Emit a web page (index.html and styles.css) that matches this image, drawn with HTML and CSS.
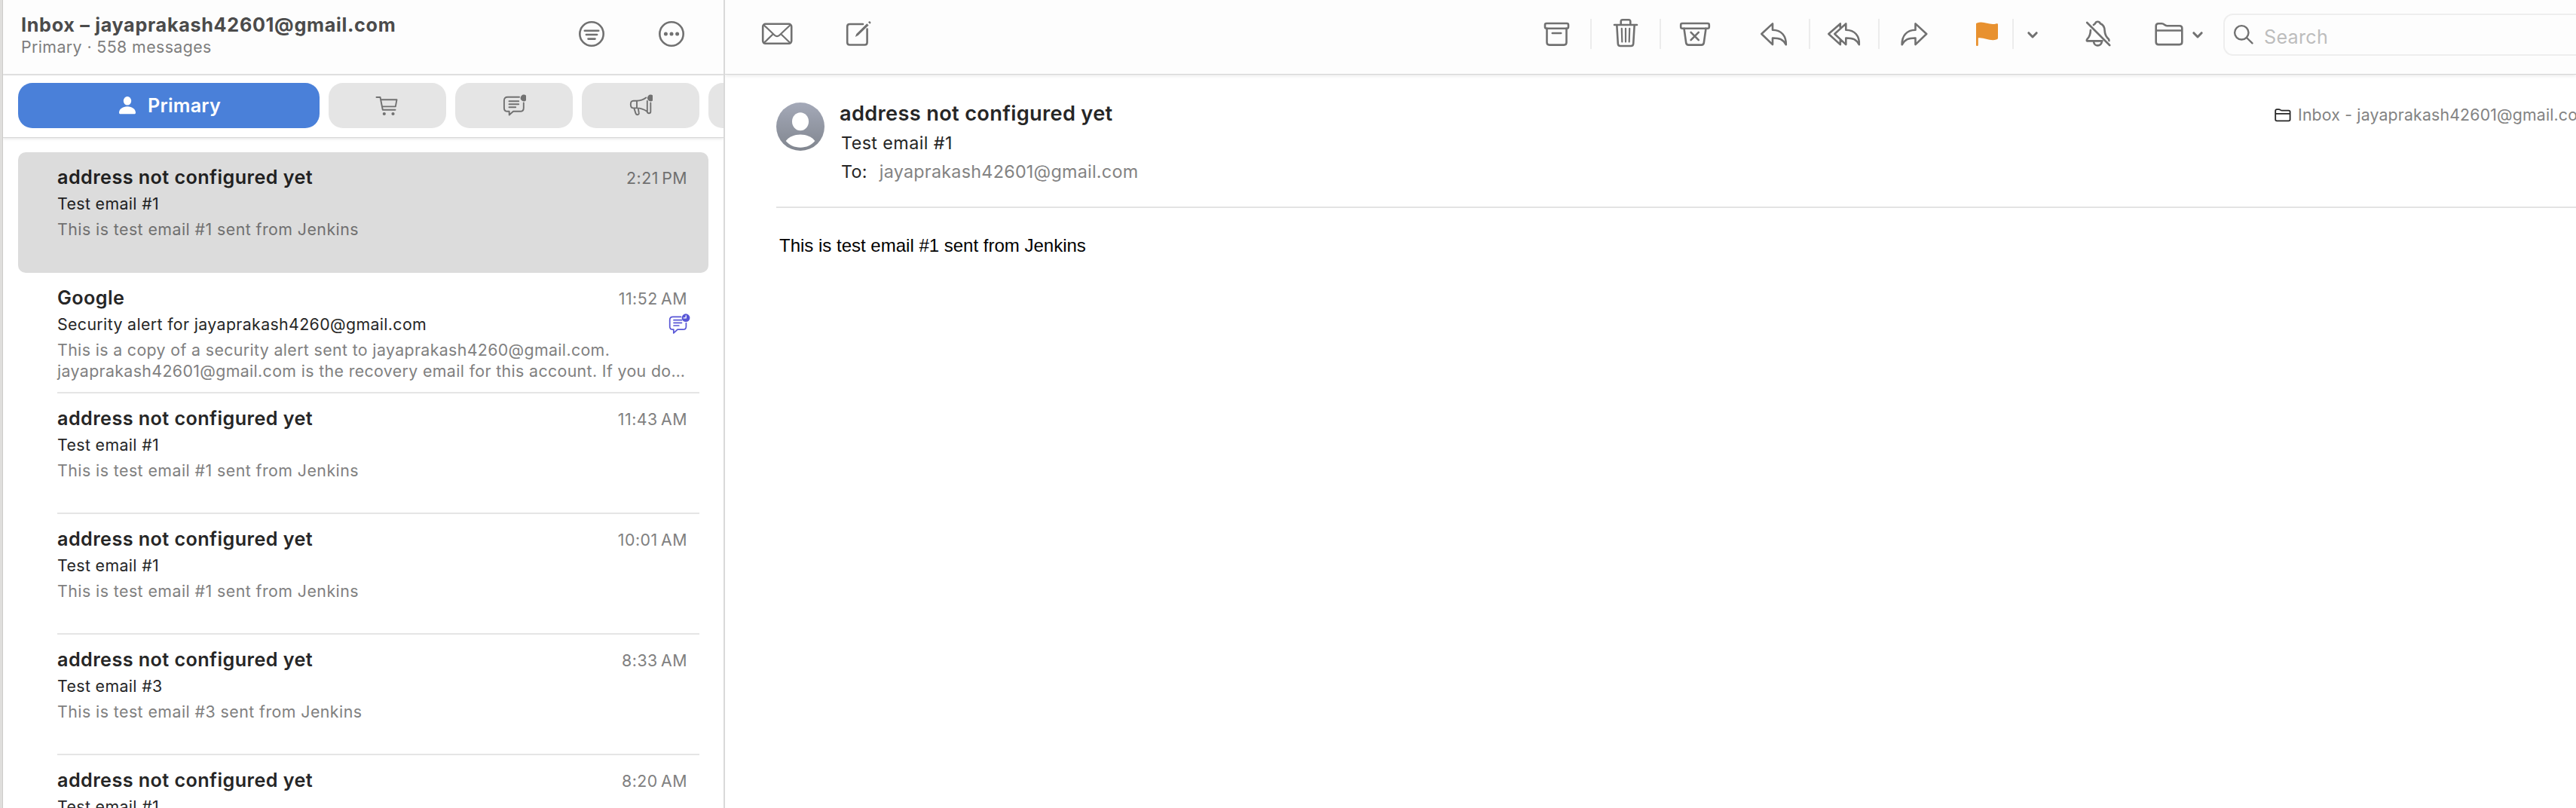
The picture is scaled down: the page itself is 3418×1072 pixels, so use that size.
FILE: index.html
```html
<!DOCTYPE html>
<html lang="en">
<head>
<meta charset="utf-8">
<title>Inbox – jayaprakash42601@gmail.com</title>
<link rel="stylesheet" href="styles.css">
</head>
<body>
<div class="window">
  <div class="sidebar-edge"></div>

  <section class="mailbox">
    <header class="mailbox-head">
      <div class="mailbox-titles">
        <h1 class="mailbox-title">Inbox – jayaprakash42601@gmail.com</h1>
        <p class="mailbox-sub">Primary · 558 messages</p>
      </div>
      <div class="mailbox-actions">
        <svg class="icon" viewBox="0 0 48 48"><circle cx="24" cy="24" r="15.7"/><path d="M14.8 19.7h18.4M16.9 25h14.2M19.5 30.6h9"/></svg>
        <svg class="icon" viewBox="0 0 48 48"><circle cx="24" cy="24" r="15.7"/><g class="solid"><circle cx="16.4" cy="24" r="2.5"/><circle cx="24" cy="24" r="2.5"/><circle cx="31.6" cy="24" r="2.5"/></g></svg>
      </div>
    </header>

    <nav class="tabs">
      <div class="tab tab-primary">
        <svg class="person" viewBox="0 0 24 26"><ellipse cx="12" cy="6.8" rx="5.2" ry="5.8"/><path d="M1 22.4C1 18 5.6 14.3 12 14.3S23 18 23 22.4c0 1.2-.7 1.8-1.9 1.8H2.9C1.7 24.2 1 23.6 1 22.4z"/></svg>
        <span>Primary</span>
      </div>
      <div class="tab"><svg class="icon icon-sm" viewBox="0 0 32 32"><path d="M1.5 5h5l3.300 16.700h16.700M7.300 8.200h21.200l-1.700 9.200H9.200"/><g class="solid"><circle cx="11.800" cy="27" r="2.100"/><circle cx="23.500" cy="27" r="2.100"/></g></svg></div>
      <div class="tab"><svg class="icon icon-sm" viewBox="0 0 32 32"><path d="M23 4.800H7.500c-3 0-4.600 1.600-4.600 4.600v9.800c0 3 1.600 4.600 4.600 4.600h2.200v4.700l5.300-4.700h9.200c3 0 4.600-1.600 4.600-4.600v-6.700M9.500 10.300h12.700M9.500 14.300h12.700M9.500 18.300h8.700"/><circle class="solid" cx="29" cy="6" r="4.400"/></svg></div>
      <div class="tab"><svg class="icon icon-sm" viewBox="0 0 32 32"><path d="M11 9.700H6.500C4 9.700 2.800 11.200 2.800 14.500s1.200 4.900 3.700 4.900H11zM11 9.700c5 0 9.500-2.100 12.300-4.200M11 19.400c5 0 10 2 14 4.800M24.800 10v14c0 1.500 1 2.200 2.200 2.200s2.300-.8 2.300-2.300V12.500M7.300 19.600l2.200 6.800c.5 1.500 1.500 2 2.700 1.700s1.900-1.300 1.500-2.700l-1-5.700"/><circle class="solid" cx="29.300" cy="6" r="4.400"/></svg></div>
      <div class="tab"></div>
    </nav>

    <div class="messages">
      <article class="message selected">
        <div class="message-body">
          <div class="line"><span class="from">address not configured yet</span><time class="time">2:21&#8201;PM</time></div>
          <div class="subject">Test email #1</div>
          <p class="preview">This is test email #1 sent from Jenkins</p>
        </div>
      </article>
      <article class="message">
        <div class="message-body">
          <div class="line"><span class="from">Google</span><time class="time">11:52&#8201;AM</time></div>
          <div class="subject"><span>Security alert for jayaprakash4260@gmail.com</span>
            <svg class="category" viewBox="0 0 30 28"><path d="M16.500 4.300H5.800C3 4.300 1.700 5.600 1.700 8.300v8.900c0 2.700 1.300 4 4.100 4h1v4.700l5.200-4.700h7.300c2.800 0 4.100-1.300 4.100-4v-4.500M7 8.700h10.500M7 12.300h10.500M7 16h6.800"/><circle class="badge" cx="23" cy="5.700" r="5.400"/><path class="hands" d="M23.200 2.800v3.100h-3"/></svg>
          </div>
          <p class="preview long">This is a copy of a security alert sent to jayaprakash4260@gmail.com.<br>jayaprakash42601@gmail.com is the recovery email for this account. If you do…</p>
        </div>
      </article>
      <article class="message">
        <div class="message-body">
          <div class="line"><span class="from">address not configured yet</span><time class="time">11:43&#8201;AM</time></div>
          <div class="subject">Test email #1</div>
          <p class="preview">This is test email #1 sent from Jenkins</p>
        </div>
      </article>
      <article class="message">
        <div class="message-body">
          <div class="line"><span class="from">address not configured yet</span><time class="time">10:01&#8201;AM</time></div>
          <div class="subject">Test email #1</div>
          <p class="preview">This is test email #1 sent from Jenkins</p>
        </div>
      </article>
      <article class="message">
        <div class="message-body">
          <div class="line"><span class="from">address not configured yet</span><time class="time">8:33&#8201;AM</time></div>
          <div class="subject">Test email #3</div>
          <p class="preview">This is test email #3 sent from Jenkins</p>
        </div>
      </article>
      <article class="message">
        <div class="message-body">
          <div class="line"><span class="from">address not configured yet</span><time class="time">8:20&#8201;AM</time></div>
          <div class="subject">Test email #1</div>
        </div>
      </article>
    </div>
  </section>

  <main class="reader">
    <header class="toolbar">
      <div class="toolbar-start">
        <svg class="icon" viewBox="0 0 48 48"><rect x="5.200" y="10.800" width="38" height="26" rx="3.500"/><path class="thin" d="M6.500 12.200l14.300 13.500c2.200 2 4.200 2 6.400 0l14.300-13.500M6.500 36l12.200-11.700M41.500 36L29.300 24.300"/></svg>
        <svg class="icon" viewBox="0 0 48 48"><path d="M30 11H12.500c-2.300 0-3.300 1-3.300 3.300v20.900c0 2.300 1 3.300 3.300 3.300h19.800c2.300 0 3.300-1 3.300-3.300V17.500"/><path class="solid" d="M35.300 10.200l2.300 2.300-14 13.600-3.800 1.800 1.500-3.900zM38 7.600c1-1 3.200 1 2.200 2.200l-1 1-2.200-2.200z"/></svg>
      </div>
      <div class="toolbar-end">
        <div class="group">
          <div class="button"><svg class="icon" viewBox="0 0 48 48"><rect x="9" y="10" width="31" height="6.700" rx="2"/><path d="M11.500 16.700v18.600c0 2.300 1 3.300 3.300 3.300h19.400c2.300 0 3.300-1 3.300-3.300V16.700M18.800 23h11.400"/></svg></div>
          <div class="button"><svg class="icon" viewBox="0 0 48 48"><path d="M9 12h30M17.700 12V7.500c0-1.500.8-2.300 2.300-2.300h8c1.500 0 2.300.8 2.300 2.300V12M12.300 12l1.500 25c.1 2 1.100 3 3.100 3h14.200c2 0 3-1 3.100-3l1.500-25"/><path class="thin" d="M18.800 16.800l.5 17.700M24 16.800v17.700M29.200 16.800l-.5 17.700"/></svg></div>
          <div class="button"><svg class="icon" viewBox="0 0 48 48"><rect x="5.200" y="10" width="37.600" height="6.700" rx="2"/><path d="M9.500 16.700l2.700 19c.3 2 1.300 2.900 3.300 2.900h17c2 0 3-.9 3.300-2.900l2.700-19M18.600 21.900l10.200 10.200M28.800 21.900L18.600 32.100"/></svg></div>
        </div>
        <div class="group">
          <div class="button"><svg class="icon" viewBox="0 0 48 48"><path d="M6.300 24L21 10.400v8.300C33 18.700 39 27 38.800 38.200 34.500 31.300 30.500 29.300 21 29.500v8.600z"/></svg></div>
          <div class="button"><svg class="icon" viewBox="0 0 48 48"><path d="M11.300 24L26.300 10.400v8.300c12 0 18.200 8.300 17.500 19.500-3.800-6.900-8-8.900-17.500-8.700v8.600zM18.800 15.500v-5.100L3.300 24l15.500 14.100v-5.300"/></svg></div>
          <div class="button"><svg class="icon" viewBox="0 0 48 48"><path d="M41.200 24L26.500 10.400v8.300C14.500 18.700 8.500 27 8.700 38.200c4.300-6.900 8.300-8.900 17.800-8.700v8.600z"/></svg></div>
        </div>
        <div class="group">
          <div class="button flag"><svg class="icon" viewBox="0 0 48 48"><path class="flag-shape" d="M11 38.500V10.800c0-.8.400-1.200 1.200-1.400 9.300-3.200 15.500 3.300 25.300 1 1.600-.4 2.500 0 2.500 1.300V29c0 1.200-.5 1.800-1.500 2.300-9 3.200-16.500-3.300-24.700-2v9.200c0 2-2.800 2-2.800 0z"/></svg></div>
          <div class="button menu"><svg class="icon chevron" viewBox="0 0 24 48"><path d="M6.800 22.700L12 28l5.200-5.300"/></svg></div>
        </div>
        <div class="group">
          <div class="button"><svg class="icon" viewBox="0 0 48 48"><path d="M18.900 12c.7-.9 1.500-1.100 2.200-1.900.6-1.700 1.800-2.300 3.300-2.300s2.700.8 3.400 2.400c3.600 1.400 5.700 4.300 5.800 9.300.2 5.200 1.500 8.100 5.200 11.300.6.700.7 1.200.6 2.200M14.900 19c-.1 5.700-1.200 8.800-4.400 11.800-.9.900-.9 2.600-.1 2.600h20M19 34c.5 7.200 10.200 7.200 10.900 0M10.200 9l30 30"/></svg></div>
        </div>
        <div class="group folder">
          <svg class="icon" viewBox="0 0 48 48"><path d="M6.700 13.500c0-2.300 1-3.300 3.300-3.300h4.300c3.700 0 3.500 3 7 3h16.700c2.300 0 3.300 1 3.300 3.300v18.300c0 2.300-1 3.300-3.300 3.300H10c-2.300 0-3.300-1-3.300-3.300zM6.700 19.500h34.600"/></svg>
          <svg class="icon chevron" viewBox="0 0 24 48"><path d="M6.800 22.700L12 28l5.200-5.300"/></svg>
        </div>
        <div class="search">
          <svg class="icon search-icon" viewBox="0 0 28 28"><circle cx="11.300" cy="11.300" r="9.200"/><path d="M18 18l7.500 7.300"/></svg>
          <span>Search</span>
        </div>
      </div>
    </header>

    <section class="mail">
      <header class="mail-head">
        <svg class="avatar" viewBox="0 0 64 64">
          <defs><linearGradient id="tone" x1="0" y1="0" x2="0" y2="1"><stop offset="0" stop-color="#a4a9b8"/><stop offset="1" stop-color="#81868f"/></linearGradient></defs>
          <circle cx="32" cy="32" r="32" fill="url(#tone)"/>
          <ellipse cx="32" cy="25.300" rx="11" ry="12" fill="#fff"/>
          <path d="M12.700 51C17 45.500 24 42.600 32 42.600S47 45.500 51.300 51C46.500 56.500 40 59.700 32 59.700S17.500 56.500 12.700 51z" fill="#fff"/>
        </svg>
        <div class="mail-info">
          <h2 class="sender">address not configured yet</h2>
          <p class="mail-subject">Test email #1</p>
          <p class="recipient"><span>To:</span><span class="address">jayaprakash42601@gmail.com</span></p>
        </div>
        <div class="location">
          <svg class="location-icon" viewBox="0 0 22 18"><path d="M1.200 3c0-1.300.6-1.900 1.900-1.900h2.700c2 0 2 1.500 4 1.500h8.900c1.300 0 1.900.6 1.900 1.900v10c0 1.300-.6 1.900-1.900 1.900H3.100c-1.300 0-1.900-.6-1.900-1.900zM1.200 6.800h19.400"/></svg>
          <span>Inbox - jayaprakash42601@gmail.com</span>
        </div>
      </header>
      <p class="mail-text">This is test email #1 sent from Jenkins</p>
    </section>
  </main>
</div>
</body>
</html>
```

FILE: styles.css
```css
* { box-sizing: border-box; }

body {
  margin: 0;
  background: #fff;
  font-family: Inter, "Liberation Sans", sans-serif;
  color: #262626;
}

h1, h2, p { margin: 0; font-weight: 400; }

svg { display: block; flex: none; }

.window {
  display: flex;
  width: 100%;
  height: 1072px;
  overflow: hidden;
}

.sidebar-edge {
  flex: none;
  width: 4px;
  background: #dfdedc;
  border-right: 1px solid #cdccca;
}

/* Icons */
.icon {
  width: 48px;
  height: 48px;
  fill: none;
  stroke: #717171;
  stroke-width: 2.6;
  stroke-linecap: round;
  stroke-linejoin: round;
}
.icon .thin { stroke-width: 2.2; }
.icon .solid { fill: #717171; stroke: none; }
.icon-sm { width: 32px; height: 32px; stroke-width: 1.9; }
.chevron { width: 24px; stroke-width: 3; }

/* Message list */
.mailbox {
  display: flex;
  flex-direction: column;
  flex: none;
  width: 958px;
  border-right: 2px solid #d9d9d9;
  overflow: hidden;
}

.mailbox-head {
  display: flex;
  justify-content: space-between;
  flex: none;
  height: 100px;
  padding: 17px 45px 0 24px;
  background: #fdfdfd;
  border-bottom: 2px solid #e4e4e4;
}

.mailbox-title {
  font-size: 25.2px;
  font-weight: 700;
  line-height: 32px;
  letter-spacing: 0.68px;
  color: #4b4b4b;
}

.mailbox-sub {
  font-size: 21.3px;
  line-height: 26px;
  letter-spacing: 0.42px;
  color: #7e7e7e;
}

.mailbox-actions {
  display: flex;
  gap: 58px;
  padding-top: 4px;
}

.tabs {
  display: flex;
  flex: none;
  gap: 12px;
  height: 83px;
  padding: 10px 0 0 20px;
  border-bottom: 1px solid #d7d7d7;
  box-shadow: 0 1px 4px rgba(0, 0, 0, 0.12);
}

.tab {
  display: flex;
  align-items: center;
  justify-content: center;
  flex: none;
  width: 156px;
  height: 60px;
  border-radius: 19px;
  background: #e5e5e5;
}

.tab-primary {
  width: 400px;
  gap: 15px;
  padding-left: 2px;
  background: #4a80d9;
  color: #fff;
  font-size: 25.2px;
  font-weight: 600;
  letter-spacing: 0.23px;
}

.person { width: 24px; height: 26px; fill: #fff; }

.messages {
  display: flex;
  flex-direction: column;
  padding: 19px 20px 0;
}

.message {
  flex: none;
  height: 160px;
  padding: 0 12px 0 52px;
}

.message-body {
  height: 160px;
  padding: 17px 16px 0 0;
  border-bottom: 2px solid #e5e5e5;
}

.selected { background: #dcdcdc; border-radius: 10px; }
.selected .message-body { border-bottom-color: transparent; }

.line {
  display: flex;
  justify-content: space-between;
  align-items: baseline;
  height: 32px;
}

.from {
  font-size: 25.2px;
  font-weight: 600;
  line-height: 32px;
  letter-spacing: 0.43px;
}

.time {
  font-size: 21.3px;
  letter-spacing: 0.5px;
  color: #808080;
}

.subject {
  display: flex;
  justify-content: space-between;
  height: 28px;
  margin-top: 5px;
  font-size: 21.3px;
  line-height: 28px;
  letter-spacing: 0.38px;
}

.category {
  width: 30px;
  height: 28px;
  margin: 0 -5px 0 0;
  fill: none;
  stroke: #5856d6;
  stroke-width: 1.7;
  stroke-linejoin: round;
  stroke-linecap: round;
}
.category .badge { fill: #5856d6; stroke: none; }
.category .hands { stroke: #fff; stroke-width: 1.3; }

.preview {
  margin-top: 6px;
  font-size: 21.3px;
  line-height: 28px;
  letter-spacing: 0.46px;
  white-space: nowrap;
  color: #808080;
}
.preview.long { letter-spacing: 0.38px; }

.selected .from, .selected .subject { color: #212121; }
.selected .time, .selected .preview { color: #707070; }

/* Reader */
.reader {
  display: flex;
  flex-direction: column;
  flex: 1;
  min-width: 0;
  overflow: hidden;
}

.toolbar {
  display: flex;
  justify-content: space-between;
  align-items: center;
  flex: none;
  height: 99px;
  padding: 0 0 8px 45px;
  background: #fdfdfd;
  border-bottom: 1px solid #d5d5d5;
  box-shadow: 0 1px 5px rgba(0, 0, 0, 0.12);
}

.toolbar-start { display: flex; gap: 60px; }

.toolbar-end { display: flex; align-items: center; gap: 16px; }

.group { display: flex; align-items: center; }

.button {
  display: flex;
  align-items: center;
  justify-content: center;
  width: 90px;
  height: 40px;
}
.button + .button { width: 92px; border-left: 2px solid #ececec; }
.button.flag { width: 70px; }
.button.flag + .menu { width: 52px; }
.icon .flag-shape { fill: #e8912f; stroke: none; }

.folder { width: 90px; padding-left: 9.5px; }
.folder .chevron { margin-left: 2.5px; }

.search {
  display: flex;
  align-items: center;
  width: 468px;
  height: 56px;
  margin-top: 2px;
  padding-left: 11px;
  border: 2px solid #eee;
  border-right: 0;
  border-radius: 13px 0 0 13px;
  font-size: 25.2px;
  letter-spacing: 0.26px;
  color: #bdbdbd;
}
.search-icon { width: 28px; height: 28px; margin-right: 13px; stroke-width: 2.4; }
.search span { line-height: 32px; padding-top: 5px; }

.mail { padding: 0 0 0 68px; }

.mail-head {
  display: flex;
  align-items: flex-start;
  height: 177px;
  padding-top: 37px;
  border-bottom: 2px solid #e3e3e3;
}

.avatar { width: 64px; height: 64px; }

.mail-info { flex: 1; padding-left: 20px; }

.sender {
  margin-top: -2px;
  font-size: 27.2px;
  font-weight: 600;
  line-height: 34px;
  letter-spacing: 0.33px;
}

.mail-subject {
  margin: 7px 0 0 2px;
  font-size: 23.3px;
  line-height: 30px;
  letter-spacing: 0.42px;
}

.recipient {
  display: flex;
  gap: 16px;
  margin: 8px 0 0 2px;
  font-size: 23.3px;
  line-height: 30px;
  letter-spacing: 0.28px;
}
.address { color: #838383; }

.location {
  display: flex;
  flex: none;
  width: 400px;
  font-size: 21.3px;
  line-height: 28px;
  letter-spacing: 0.16px;
  white-space: nowrap;
  color: #838383;
}
.location-icon {
  width: 22px;
  height: 18px;
  margin: 8px 9px 0 0;
  fill: none;
  stroke: #262626;
  stroke-width: 1.8;
}
.location span { margin-top: 2px; }

.mail-text {
  padding: 36px 0 0 4px;
  font-family: "Liberation Sans", Arial, sans-serif;
  font-size: 24px;
  line-height: 28px;
  color: #000;
}
```
